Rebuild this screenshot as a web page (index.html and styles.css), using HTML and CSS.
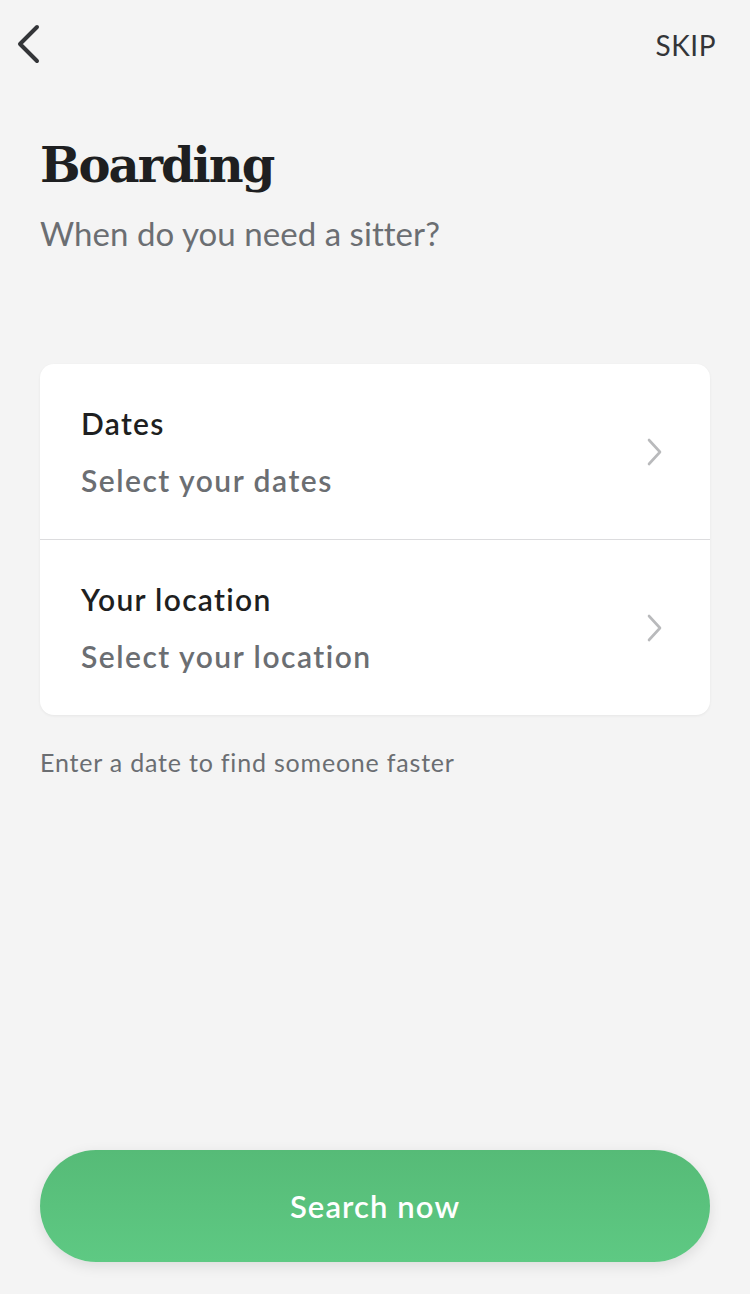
FILE: index.html
```html
<!DOCTYPE html>
<html lang="en">
<head>
<meta charset="utf-8">
<title>Boarding</title>
<link rel="stylesheet" href="styles.css">
</head>
<body>
<div class="page">
  <header class="topbar">
    <button class="back" aria-label="Back">
      <svg width="30" height="44" viewBox="0 0 30 44" fill="none" stroke="#333538" stroke-width="4" stroke-linecap="round" stroke-linejoin="round"><path d="M23 5 L6 22 L23 39"/></svg>
    </button>
    <span class="skip">SKIP</span>
  </header>

  <h1 class="title">Boarding</h1>
  <p class="subtitle">When do you need a sitter?</p>

  <section class="card">
    <div class="row">
      <div class="row-text">
        <div class="row-title">Dates</div>
        <div class="row-value">Select your dates</div>
      </div>
      <svg class="chev" width="20" height="28" viewBox="0 0 20 28" fill="none" stroke="#b9babc" stroke-width="2.6" stroke-linecap="round" stroke-linejoin="round"><path d="M5 2 L16 14 L5 26"/></svg>
    </div>
    <div class="row">
      <div class="row-text">
        <div class="row-title">Your location</div>
        <div class="row-value">Select your location</div>
      </div>
      <svg class="chev" width="20" height="28" viewBox="0 0 20 28" fill="none" stroke="#b9babc" stroke-width="2.6" stroke-linecap="round" stroke-linejoin="round"><path d="M5 2 L16 14 L5 26"/></svg>
    </div>
  </section>

  <p class="hint">Enter a date to find someone faster</p>

  <button class="cta">Search now</button>
</div>
</body>
</html>
```
FILE: styles.css
```css
html, body {
  margin: 0;
  padding: 0;
  background: #f4f4f4;
}

.page {
  box-sizing: border-box;
  height: 1294px;
  display: flex;
  flex-direction: column;
  padding: 0 40px 32px;
  font-family: Lato, "Open Sans", sans-serif;
}

.topbar {
  display: flex;
  justify-content: space-between;
  align-items: center;
  height: 90px;
  margin: 0 -40px;
  padding: 0 34px 0 14px;
}

.back {
  background: none;
  border: 0;
  padding: 0;
  margin-top: -2px;
  display: flex;
}

.skip {
  font-size: 28px;
  color: #333538;
  letter-spacing: 0.5px;
}

.title {
  margin: 46px 0 0;
  font-family: "DejaVu Serif", "Liberation Serif", serif;
  font-weight: 700;
  font-size: 48px;
  line-height: 58px;
  letter-spacing: -2px;
  color: #1e1f21;
}

.subtitle {
  margin: 19px 0 0;
  font-size: 33px;
  line-height: 40px;
  letter-spacing: 0.05px;
  color: #6b6e72;
}

.card {
  margin-top: 111px;
  background: #fff;
  border-radius: 14px;
  box-shadow: 0 1px 3px rgba(0, 0, 0, 0.06);
}

.row {
  display: flex;
  align-items: center;
  justify-content: space-between;
  padding: 41px 46px 41px 41px;
}

.row + .row {
  border-top: 1px solid #dcdcde;
}

.row-text {
  display: flex;
  flex-direction: column;
  gap: 21px;
}

.row-title {
  font-size: 30px;
  line-height: 36px;
  font-weight: 600;
  letter-spacing: 1.3px;
  color: #1e1f21;
}

.row-value {
  font-size: 30px;
  line-height: 36px;
  font-weight: 600;
  letter-spacing: 1.5px;
  color: #6b6e72;
}

.hint {
  margin: 32px 0 0;
  font-size: 25px;
  line-height: 30px;
  letter-spacing: 0.8px;
  color: #6b6e72;
}

.cta {
  margin-top: auto;
  height: 112px;
  border: 0;
  border-radius: 56px;
  background: linear-gradient(#56bb77, #5ec983);
  box-shadow: 0 4px 14px rgba(0, 0, 0, 0.1);
  color: #fff;
  font-family: Lato, "Open Sans", sans-serif;
  font-size: 31px;
  font-weight: 600;
  letter-spacing: 1.1px;
}
```
